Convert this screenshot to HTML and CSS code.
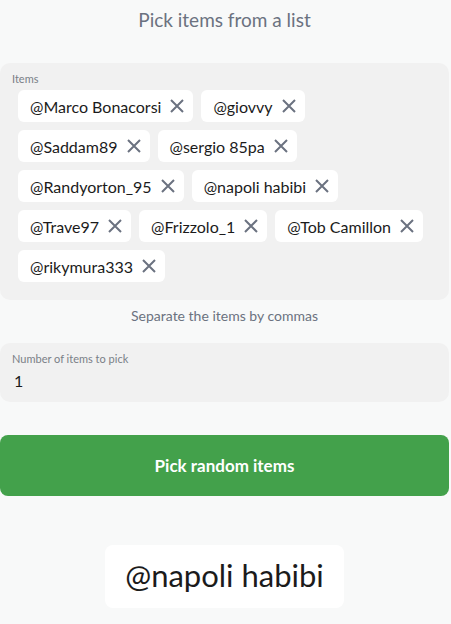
FILE: index.html
```html
<!DOCTYPE html>
<html lang="en">
<head>
<meta charset="utf-8">
<title>Pick items from a list</title>
<link rel="stylesheet" href="styles.css">
</head>
<body>
<main class="page">
  <h1 class="title">Pick items from a list</h1>

  <section class="field items-field">
    <label class="field-label">Items</label>
    <div class="chips">
      <span class="chip">@Marco Bonacorsi<svg class="x" viewBox="0 0 14 14"><path d="M1 1L13 13M13 1L1 13"/></svg></span>
      <span class="chip">@giovvy<svg class="x" viewBox="0 0 14 14"><path d="M1 1L13 13M13 1L1 13"/></svg></span>
      <span class="chip">@Saddam89<svg class="x" viewBox="0 0 14 14"><path d="M1 1L13 13M13 1L1 13"/></svg></span>
      <span class="chip">@sergio 85pa<svg class="x" viewBox="0 0 14 14"><path d="M1 1L13 13M13 1L1 13"/></svg></span>
      <span class="chip">@Randyorton_95<svg class="x" viewBox="0 0 14 14"><path d="M1 1L13 13M13 1L1 13"/></svg></span>
      <span class="chip">@napoli habibi<svg class="x" viewBox="0 0 14 14"><path d="M1 1L13 13M13 1L1 13"/></svg></span>
      <span class="chip">@Trave97<svg class="x" viewBox="0 0 14 14"><path d="M1 1L13 13M13 1L1 13"/></svg></span>
      <span class="chip">@Frizzolo_1<svg class="x" viewBox="0 0 14 14"><path d="M1 1L13 13M13 1L1 13"/></svg></span>
      <span class="chip">@Tob Camillon<svg class="x" viewBox="0 0 14 14"><path d="M1 1L13 13M13 1L1 13"/></svg></span>
      <span class="chip">@rikymura333<svg class="x" viewBox="0 0 14 14"><path d="M1 1L13 13M13 1L1 13"/></svg></span>
    </div>
  </section>
  <p class="hint">Separate the items by commas</p>

  <section class="field number-field">
    <label class="field-label">Number of items to pick</label>
    <div class="value">1</div>
  </section>

  <button class="pick-btn">Pick random items</button>

  <div class="result-wrap">
    <div class="result">@napoli habibi</div>
  </div>
</main>
</body>
</html>
```

FILE: styles.css
```css
* { box-sizing: border-box; }
html, body {
  margin: 0;
  padding: 0;
  background: #f8f9f9;
}
body {
  font-family: Lato, "Noto Sans", sans-serif;
  color: #1b1b1b;
}
.page {
  width: 449px;
  display: flex;
  flex-direction: column;
}
.title {
  margin: 0;
  padding-top: 8px;
  height: 63px;
  text-align: center;
  font-size: 19px;
  font-weight: 400;
  color: #6b7280;
}
.field {
  background: #f1f1f1;
  border-radius: 10px;
}
.field-label {
  display: block;
  font-size: 11px;
  color: #7a7f87;
}
.items-field {
  padding: 9px 12px 9px 12px;
  height: 237px;
}
.chips {
  display: flex;
  flex-wrap: wrap;
  gap: 8px;
  padding: 5px 6px 0;
}
.chip {
  display: inline-flex;
  align-items: center;
  height: 32px;
  padding: 0 9px 0 12px;
  background: #fff;
  border-radius: 6px;
  font-size: 16px;
  color: #1b1b1b;
}
.x {
  width: 14px;
  height: 14px;
  margin-left: 9px;
  fill: none;
  stroke: #6b7280;
  stroke-width: 2;
}
.hint {
  margin: 0;
  height: 43px;
  padding-top: 7px;
  text-align: center;
  font-size: 14px;
  color: #6b7280;
}
.number-field {
  height: 59px;
  padding: 9px 12px;
}
.value {
  font-size: 16px;
  margin-top: 6px;
  padding-left: 2px;
}
.pick-btn {
  margin-top: 33px;
  height: 61px;
  border: none;
  border-radius: 8px;
  background: #43a14b;
  color: #fff;
  font-family: inherit;
  font-size: 17px;
  font-weight: 700;
}
.result-wrap {
  display: flex;
  justify-content: center;
  padding-top: 49px;
}
.result {
  background: #fff;
  border-radius: 8px;
  padding: 11px 20px;
  height: 63px;
  font-size: 31px;
  color: #1b1b1b;
}
```
